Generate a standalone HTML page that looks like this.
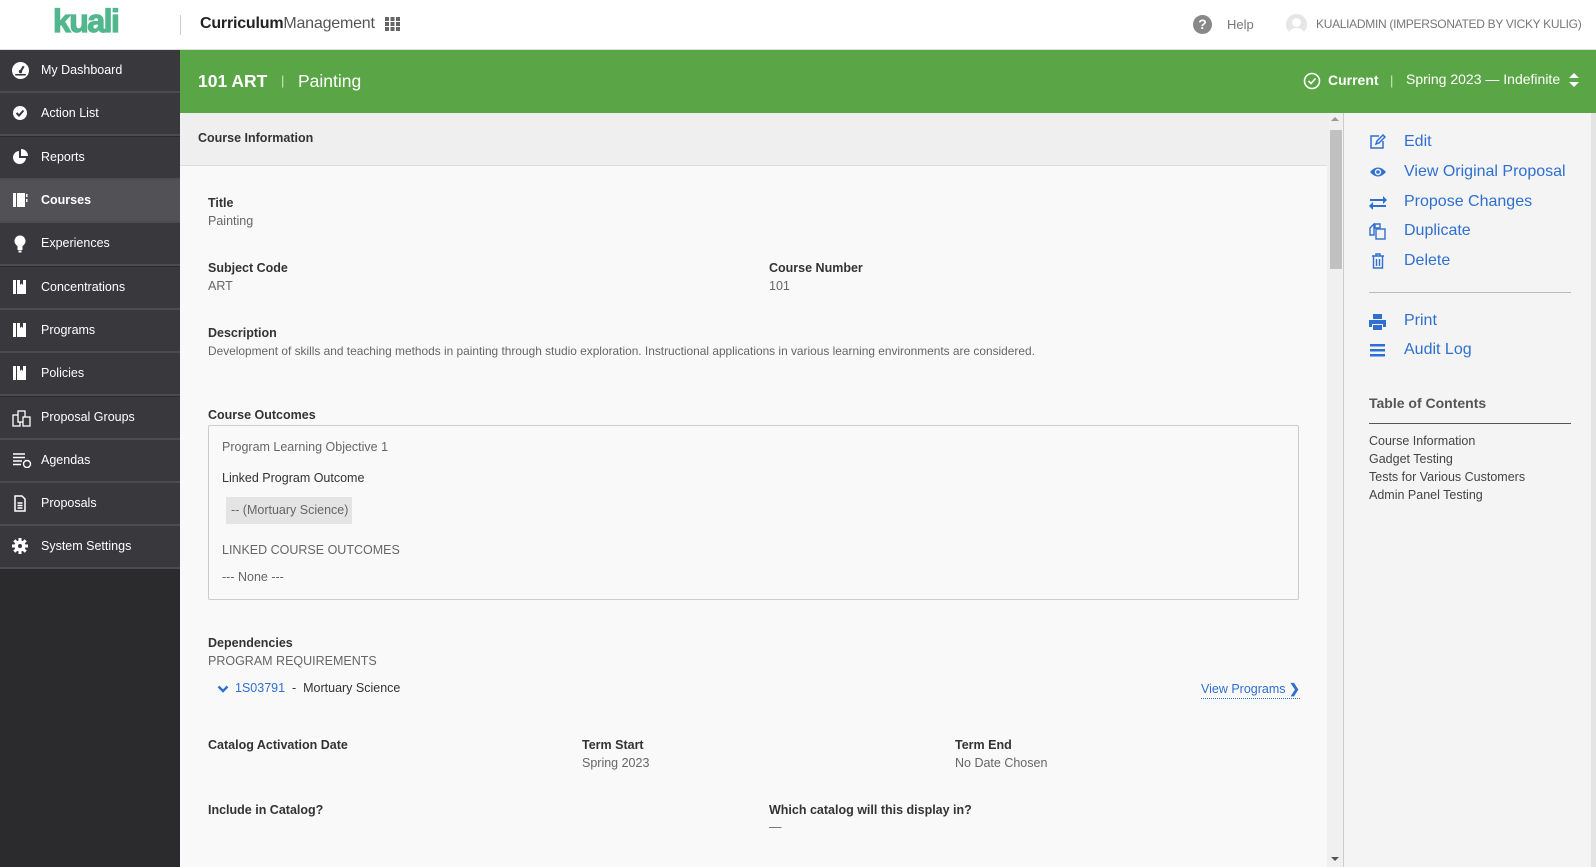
<!DOCTYPE html>
<html><head><meta charset="utf-8"><style>
*{box-sizing:border-box;margin:0;padding:0}
body{width:1596px;height:867px;overflow:hidden;background:#f9f9f9;font-family:"Liberation Sans",Arial,sans-serif;position:relative}
.a{position:absolute;white-space:nowrap}
.top{position:absolute;left:0;top:0;width:1596px;height:50px;background:#fff;border-bottom:1px solid #ddd}
.side{position:absolute;left:0;top:50px;width:180px;height:817px;background:#2b2b2d}
.item{position:absolute;left:0;width:180px;height:43px;background:#38383d;border-bottom:2px solid #4b4b50;color:#fff;font-size:12.5px;line-height:41px;padding-left:41px}
.item.sel{background:#515156}
.item svg{position:absolute;left:12px;top:12px}
.green{position:absolute;left:180px;top:50px;width:1416px;height:63px;background:#5aa646;color:#fff}
.lbl{font-size:12.5px;font-weight:bold;color:#333}
.val{font-size:12.5px;color:#666}
.act{font-size:16px;color:#2f6fd0}
.toc{font-size:12.5px;color:#444}
</style></head><body>
<div class="top">
 <div class="a" style="left:53px;top:3px;font-size:32px;font-weight:900;color:#52b78d;letter-spacing:-1.5px;-webkit-text-stroke:1.2px #52b78d">kuali</div>
 <div class="a" style="left:180px;top:15px;width:1px;height:20px;background:#ccc"></div>
 <div class="a" style="left:200px;top:15px;font-size:16px;color:#222;letter-spacing:-0.2px"><b>Curriculum</b><span style="color:#555">Management</span></div>
 <svg class="a" style="left:385px;top:17px" width="15" height="14" viewBox="0 0 15 14" fill="#666"><rect x="0" y="0" width="4" height="4"/><rect x="5.5" y="0" width="4" height="4"/><rect x="11" y="0" width="4" height="4"/><rect x="0" y="5" width="4" height="4"/><rect x="5.5" y="5" width="4" height="4"/><rect x="11" y="5" width="4" height="4"/><rect x="0" y="10" width="4" height="4"/><rect x="5.5" y="10" width="4" height="4"/><rect x="11" y="10" width="4" height="4"/></svg>
 <div class="a" style="left:1193px;top:15px;width:19px;height:19px;border-radius:50%;background:#888;color:#fff;font-size:14px;font-weight:bold;text-align:center;line-height:19px">?</div>
 <div class="a" style="left:1227px;top:17px;font-size:13px;color:#777">Help</div>
 <div class="a" style="left:1286px;top:14px;width:21px;height:21px;border-radius:50%;background:#e6e6e6;overflow:hidden"><div style="position:absolute;left:6px;top:4px;width:9px;height:9px;border-radius:50%;background:#fff"></div><div style="position:absolute;left:3px;top:14px;width:15px;height:10px;border-radius:50%;background:#fff"></div></div>
 <div class="a" style="left:1316px;top:17px;font-size:12px;color:#777;letter-spacing:-0.3px">KUALIADMIN (IMPERSONATED BY VICKY KULIG)</div>
</div>
<div class="side">
 <div class="item" style="top:0"><svg width="17" height="17" viewBox="0 0 16 16"><circle cx="8" cy="8" r="8" fill="#fff"/><path d="M8 9 L11 4" stroke="#38383d" stroke-width="2"/><circle cx="8" cy="9" r="1.6" fill="#38383d"/><path d="M3 12h10" stroke="#38383d" stroke-width="1.5"/></svg>My Dashboard</div>
 <div class="item" style="top:43px"><svg width="16" height="16" viewBox="0 0 16 16"><circle cx="8" cy="8" r="7" fill="#fff"/><path d="M4.5 8l2.5 2.5 4.5-5" stroke="#38383d" stroke-width="2" fill="none"/></svg>Action List</div>
 <div class="item" style="top:87px"><svg width="16" height="16" viewBox="0 0 16 16"><path d="M7 2a6.5 6.5 0 1 0 7 7H7z" fill="#fff"/><path d="M9 0v7h7a7 7 0 0 0-7-7z" fill="#fff"/></svg>Reports</div>
 <div class="item sel" style="top:130px;font-weight:bold"><svg width="16" height="16" viewBox="0 0 16 16"><rect x="1" y="1" width="3" height="14" fill="#fff"/><rect x="5" y="1" width="8" height="14" fill="#fff"/><rect x="14" y="2" width="1.5" height="3" fill="#fff"/><rect x="14" y="7" width="1.5" height="3" fill="#fff"/></svg>Courses</div>
 <div class="item" style="top:173px"><svg width="16" height="18" viewBox="0 0 16 18"><circle cx="8" cy="6" r="5.5" fill="#fff"/><rect x="5.5" y="10" width="5" height="5" fill="#fff"/><rect x="6.5" y="15.5" width="3" height="2" fill="#fff"/></svg>Experiences</div>
 <div class="item" style="top:217px"><svg width="16" height="16" viewBox="0 0 16 16"><rect x="1" y="1" width="3" height="14" fill="#fff"/><path d="M5 1h3v5l1.5-1.5L11 6V1h3v14H5z" fill="#fff"/></svg>Concentrations</div>
 <div class="item" style="top:260px"><svg width="16" height="16" viewBox="0 0 16 16"><rect x="1" y="1" width="3" height="14" fill="#fff"/><path d="M5 1h3v5l1.5-1.5L11 6V1h3v14H5z" fill="#fff"/></svg>Programs</div>
 <div class="item" style="top:303px"><svg width="16" height="16" viewBox="0 0 16 16"><rect x="1" y="1" width="3" height="14" fill="#fff"/><path d="M5 1h3v5l1.5-1.5L11 6V1h3v14H5z" fill="#fff"/></svg>Policies</div>
 <div class="item" style="top:347px"><svg width="20" height="18" viewBox="0 0 20 18" fill="none" stroke="#fff" stroke-width="1.3"><rect x="1" y="6" width="7" height="11"/><rect x="6" y="2" width="7" height="11" fill="#38383d"/><rect x="11" y="8" width="7" height="9" fill="#38383d"/></svg>Proposal Groups</div>
 <div class="item" style="top:390px"><svg width="20" height="16" viewBox="0 0 20 16" stroke="#fff" stroke-width="1.4" fill="none"><path d="M1 2h12M1 5.5h12M1 9h9M1 12.5h8"/><circle cx="15" cy="12" r="3.5"/></svg>Agendas</div>
 <div class="item" style="top:433px"><svg width="16" height="17" viewBox="0 0 16 17" fill="none" stroke="#fff" stroke-width="1.5"><path d="M3 1h7l3 3v12H3z"/><path d="M5.5 8h5M5.5 10.5h5M5.5 13h5"/></svg>Proposals</div>
 <div class="item" style="top:476px"><svg width="16" height="16" viewBox="0 0 16 16"><circle cx="8" cy="8" r="5.5" fill="#fff"/><path d="M8 0v16M0 8h16M2.3 2.3l11.4 11.4M13.7 2.3L2.3 13.7" stroke="#fff" stroke-width="3"/><circle cx="8" cy="8" r="2" fill="#38383d"/></svg>System Settings</div>
</div>
<div class="green">
 <div class="a" style="left:18px;top:21px;font-size:17.5px;font-weight:bold">101 ART</div>
 <div class="a" style="left:101px;top:23px;font-size:13px;color:#cfe8c4">|</div>
 <div class="a" style="left:118px;top:21px;font-size:17.5px">Painting</div>
 <svg class="a" style="left:1123px;top:22px" width="18" height="18" viewBox="0 0 18 18" fill="none" stroke="#fff" stroke-width="1.6"><circle cx="9" cy="9" r="7.5"/><path d="M5.5 9l2.5 2.5 4.5-5"/></svg>
 <div class="a" style="left:1148px;top:22px;font-size:14px;font-weight:bold">Current</div>
 <div class="a" style="left:1210px;top:23px;font-size:13px;color:#cfe8c4">|</div>
 <div class="a" style="left:1226px;top:21px;font-size:14px">Spring 2023 — Indefinite</div>
 <svg class="a" style="left:1389px;top:23px" width="10" height="14" viewBox="0 0 10 14" fill="#fff"><path d="M5 0L10 5H0zM5 14L0 9h10z"/></svg>
</div>
<div class="a" style="left:180px;top:113px;width:1147px;height:53px;background:#efefef;border-bottom:1px solid #ddd"></div>
<div class="a lbl" style="left:198px;top:131px">Course Information</div>
<div class="a" style="left:1327px;top:113px;width:17px;height:754px;background:#f0f0f0"></div>
<div class="a" style="left:1330px;top:130px;width:12px;height:139px;background:#c1c1c1"></div>
<div class="a" style="left:1331px;top:117px;width:0;height:0;border-left:4px solid transparent;border-right:4px solid transparent;border-bottom:4px solid #999"></div>
<div class="a" style="left:1331px;top:857px;width:0;height:0;border-left:4px solid transparent;border-right:4px solid transparent;border-top:4px solid #555"></div>
<div class="a" style="left:1343px;top:113px;width:253px;height:754px;background:#f4f4f4;border-left:1px solid #ccc"></div>
<div class="a" style="left:1591px;top:113px;width:5px;height:754px;background:#e4e4e4"></div>

<div class="a lbl" style="left:208px;top:196px">Title</div>
<div class="a val" style="left:208px;top:214px">Painting</div>
<div class="a lbl" style="left:208px;top:261px">Subject Code</div>
<div class="a val" style="left:208px;top:279px">ART</div>
<div class="a lbl" style="left:769px;top:261px">Course Number</div>
<div class="a val" style="left:769px;top:279px">101</div>
<div class="a lbl" style="left:208px;top:326px">Description</div>
<div class="a val" style="left:208px;top:344px;font-size:11.9px">Development of skills and teaching methods in painting through studio exploration. Instructional applications in various learning environments are considered.</div>
<div class="a lbl" style="left:208px;top:408px">Course Outcomes</div>
<div class="a" style="left:208px;top:425px;width:1091px;height:175px;border:1px solid #ccc;border-radius:2px"></div>
<div class="a val" style="left:222px;top:440px">Program Learning Objective 1</div>
<div class="a" style="left:222px;top:471px;font-size:12.5px;color:#333">Linked Program Outcome</div>
<div class="a val" style="left:226px;top:497px;width:126px;height:27px;background:#e4e4e4;line-height:27px;padding-left:5px">-- (Mortuary Science)</div>
<div class="a val" style="left:222px;top:543px">LINKED COURSE OUTCOMES</div>
<div class="a val" style="left:222px;top:570px">--- None ---</div>
<div class="a lbl" style="left:208px;top:636px">Dependencies</div>
<div class="a val" style="left:208px;top:654px">PROGRAM REQUIREMENTS</div>
<svg class="a" style="left:217px;top:685px" width="12" height="9" viewBox="0 0 12 9"><path d="M1.5 1.5l4.5 4.5 4.5-4.5" stroke="#2f6fd0" stroke-width="2.4" fill="none"/></svg>
<div class="a" style="left:235px;top:681px;font-size:12.5px;color:#2f6fd0">1S03791 <span style="color:#333">&nbsp;-&nbsp; Mortuary Science</span></div>
<div class="a" style="left:1201px;top:681px;font-size:12.5px;color:#2f6fd0;border-bottom:1px dotted #2f6fd0;padding-bottom:1px">View Programs <b style="font-size:13px">&#x276F;</b></div>
<div class="a lbl" style="left:208px;top:738px">Catalog Activation Date</div>
<div class="a lbl" style="left:582px;top:738px">Term Start</div>
<div class="a val" style="left:582px;top:756px">Spring 2023</div>
<div class="a lbl" style="left:955px;top:738px">Term End</div>
<div class="a val" style="left:955px;top:756px">No Date Chosen</div>
<div class="a lbl" style="left:208px;top:803px">Include in Catalog?</div>
<div class="a lbl" style="left:769px;top:803px">Which catalog will this display in?</div>
<div class="a val" style="left:769px;top:820px">—</div>

<svg class="a" style="left:1369px;top:134px" width="17" height="16" viewBox="0 0 17 16" fill="none" stroke="#2f6fd0" stroke-width="1.5"><path d="M10 2H2v12h12V7"/><path d="M7 10l1-3 6-6 2 2-6 6z"/></svg>
<div class="a act" style="left:1404px;top:133px">Edit</div>
<svg class="a" style="left:1369px;top:166px" width="18" height="12" viewBox="0 0 18 12"><path d="M1 6Q9-3 17 6Q9 15 1 6z" fill="#2f6fd0"/><circle cx="9" cy="6" r="3.2" fill="#f4f4f4"/><circle cx="9" cy="6" r="1.8" fill="#2f6fd0"/></svg>
<div class="a act" style="left:1404px;top:163px">View Original Proposal</div>
<svg class="a" style="left:1369px;top:196px" width="18" height="14" viewBox="0 0 18 14" fill="#2f6fd0"><path d="M1 3h13V0l4 4-4 4V5H1zM17 9H4V6l-4 4 4 4v-3h13z"/></svg>
<div class="a act" style="left:1404px;top:193px">Propose Changes</div>
<svg class="a" style="left:1369px;top:223px" width="17" height="17" viewBox="0 0 17 17" fill="none" stroke="#2f6fd0" stroke-width="1.4"><path d="M6 1h5v4H6zM1 5l4-4v11H1z"/><rect x="7" y="6" width="9" height="10"/></svg>
<div class="a act" style="left:1404px;top:222px">Duplicate</div>
<svg class="a" style="left:1371px;top:253px" width="14" height="16" viewBox="0 0 14 16" fill="none" stroke="#2f6fd0" stroke-width="1.4"><path d="M1 3h12M5 3V1h4v2M2.5 3v12h9V3M5.5 6v7M8.5 6v7"/></svg>
<div class="a act" style="left:1404px;top:252px">Delete</div>
<div class="a" style="left:1369px;top:292px;width:202px;height:1px;background:#bbb"></div>
<svg class="a" style="left:1369px;top:314px" width="17" height="16" viewBox="0 0 17 16" fill="#2f6fd0"><rect x="4" y="0" width="9" height="5"/><path d="M0 6h17v7h-3v-3H3v3H0z"/><rect x="4" y="11" width="9" height="5"/></svg>
<div class="a act" style="left:1404px;top:312px">Print</div>
<svg class="a" style="left:1370px;top:344px" width="15" height="13" viewBox="0 0 15 13" fill="#2f6fd0"><rect y="0" width="15" height="2.5"/><rect y="5" width="15" height="2.5"/><rect y="10" width="15" height="2.5"/></svg>
<div class="a act" style="left:1404px;top:341px">Audit Log</div>
<div class="a" style="left:1369px;top:395px;font-size:14px;font-weight:bold;color:#555">Table of Contents</div>
<div class="a" style="left:1369px;top:423px;width:202px;height:1px;background:#555"></div>
<div class="a toc" style="left:1369px;top:434px">Course Information</div>
<div class="a toc" style="left:1369px;top:452px">Gadget Testing</div>
<div class="a toc" style="left:1369px;top:470px">Tests for Various Customers</div>
<div class="a toc" style="left:1369px;top:488px">Admin Panel Testing</div>
</body></html>
